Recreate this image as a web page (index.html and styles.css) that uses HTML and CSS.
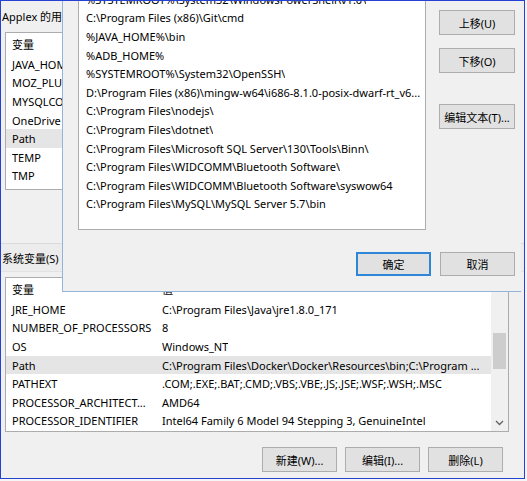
FILE: index.html
```html
<!DOCTYPE html>
<html lang="zh-CN">
<head>
<meta charset="utf-8">
<title>环境变量</title>
<link rel="stylesheet" href="styles.css">
</head>
<body>
<div class="screen">
  <div class="window">
    <div class="label user-label">Applex 的用</div>
    <div class="list user-list">
      <div class="list-head"><div class="cell c1">变量</div></div>
      <div class="row"><div class="cell c1">JAVA_HOME</div></div>
      <div class="row"><div class="cell c1">MOZ_PLUGIN_PATH</div></div>
      <div class="row"><div class="cell c1">MYSQLCONNECTOR</div></div>
      <div class="row"><div class="cell c1">OneDrive</div></div>
      <div class="row sel"><div class="cell c1">Path</div></div>
      <div class="row"><div class="cell c1">TEMP</div></div>
      <div class="row"><div class="cell c1">TMP</div></div>
    </div>
    <div class="sys-band">
      <div class="label">系统变量(S)</div>
    </div>
    <div class="list sys-list">
      <div class="list-body">
        <div class="list-head"><div class="cell c1">变量</div><div class="cell">值</div></div>
        <div class="row"><div class="cell c1">JRE_HOME</div><div class="cell">C:\Program Files\Java\jre1.8.0_171</div></div>
        <div class="row"><div class="cell c1">NUMBER_OF_PROCESSORS</div><div class="cell">8</div></div>
        <div class="row"><div class="cell c1">OS</div><div class="cell">Windows_NT</div></div>
        <div class="row sel"><div class="cell c1">Path</div><div class="cell">C:\Program Files\Docker\Docker\Resources\bin;C:\Program ...</div></div>
        <div class="row"><div class="cell c1">PATHEXT</div><div class="cell">.COM;.EXE;.BAT;.CMD;.VBS;.VBE;.JS;.JSE;.WSF;.WSH;.MSC</div></div>
        <div class="row"><div class="cell c1">PROCESSOR_ARCHITECT...</div><div class="cell">AMD64</div></div>
        <div class="row"><div class="cell c1">PROCESSOR_IDENTIFIER</div><div class="cell">Intel64 Family 6 Model 94 Stepping 3, GenuineIntel</div></div>
      </div>
      <div class="scrollbar">
        <div class="sb-thumb"></div>
        <div class="sb-arrow">
          <svg width="9" height="6" viewBox="0 0 9 6"><polyline points="1,1 4.5,4.5 8,1" fill="none" stroke="#606060" stroke-width="1.3"/></svg>
        </div>
      </div>
    </div>
    <div class="btn-row">
      <button class="btn">新建(W)...</button>
      <button class="btn">编辑(I)...</button>
      <button class="btn">删除(L)</button>
    </div>
  </div>

  <div class="dialog">
    <div class="dlg-main">
      <div class="list dlg-list">
        <div class="row"><div class="cell">%SYSTEMROOT%\System32\WindowsPowerShell\v1.0\</div></div>
        <div class="row"><div class="cell">C:\Program Files (x86)\Git\cmd</div></div>
        <div class="row"><div class="cell">%JAVA_HOME%\bin</div></div>
        <div class="row"><div class="cell">%ADB_HOME%</div></div>
        <div class="row"><div class="cell">%SYSTEMROOT%\System32\OpenSSH\</div></div>
        <div class="row"><div class="cell">D:\Program Files (x86)\mingw-w64\i686-8.1.0-posix-dwarf-rt_v6...</div></div>
        <div class="row"><div class="cell">C:\Program Files\nodejs\</div></div>
        <div class="row"><div class="cell">C:\Program Files\dotnet\</div></div>
        <div class="row"><div class="cell">C:\Program Files\Microsoft SQL Server\130\Tools\Binn\</div></div>
        <div class="row"><div class="cell">C:\Program Files\WIDCOMM\Bluetooth Software\</div></div>
        <div class="row"><div class="cell">C:\Program Files\WIDCOMM\Bluetooth Software\syswow64</div></div>
        <div class="row"><div class="cell">C:\Program Files\MySQL\MySQL Server 5.7\bin</div></div>
      </div>
      <div class="dlg-side">
        <button class="btn">上移(U)</button>
        <button class="btn">下移(O)</button>
        <button class="btn side-gap">编辑文本(T)...</button>
      </div>
    </div>
    <div class="dlg-footer">
      <button class="btn btn-sm default">确定</button>
      <button class="btn btn-sm">取消</button>
    </div>
  </div>
</div>
</body>
</html>
```

FILE: styles.css
```css
* {
  box-sizing: border-box;
}

html,
body {
  margin: 0;
  padding: 0;
}

body {
  width: 527px;
  height: 481px;
  overflow: hidden;
  background: #f5f5f5;
  font-family: "Noto Sans", "Noto Sans CJK SC", sans-serif;
  font-size: 11px;
  color: #000;
}

.screen {
  position: relative;
  width: 527px;
  height: 481px;
}

.window {
  width: 525px;
  height: 479px;
  background: #f0f0f0;
  border: 1px solid #2443d4;
  display: flex;
  flex-direction: column;
  overflow: hidden;
}

.label {
  line-height: 18px;
  white-space: nowrap;
  padding-left: 1px;
}

.user-label {
  padding-top: 7px;
}

.list {
  background: #fff;
  border: 1px solid #acacac;
  overflow: hidden;
}

.user-list {
  margin: 6px 0 0 4px;
  width: 504px;
  height: 158px;
  flex: none;
}

.list-head {
  display: flex;
  align-items: center;
  height: 22px;
}

.row {
  display: flex;
  align-items: center;
  height: 18.6px;
}

.row.sel {
  background: #e5e5e5;
}

.cell {
  padding-left: 6px;
  white-space: nowrap;
  overflow: hidden;
}

.c1 {
  width: 150px;
  flex: none;
}

.sys-band {
  margin-top: 53px;
  height: 29px;
  border-top: 1px solid #dadada;
  background: #ececec;
  border-bottom: 1px solid #e2e2e2;
  padding-top: 6px;
  flex: none;
}

.sys-list {
  margin: 5px 0 0 4px;
  width: 504px;
  height: 155px;
  flex: none;
  display: flex;
}

.list-body {
  flex: 1;
  min-width: 0;
}

.scrollbar {
  width: 17px;
  flex: none;
  background: #f0f0f0;
  display: flex;
  flex-direction: column;
  align-items: center;
}

.sb-thumb {
  margin-top: 55px;
  width: 13px;
  height: 36px;
  background: #cdcdcd;
}

.sb-arrow {
  margin-top: auto;
  height: 17px;
  display: flex;
  align-items: center;
  justify-content: center;
}

.sb-arrow svg {
  display: block;
}

.btn-row {
  display: flex;
  justify-content: flex-end;
  gap: 8px;
  margin-top: 15px;
  padding-right: 21px;
}

.btn {
  width: 75px;
  height: 25px;
  margin: 0;
  padding: 0;
  background: #e1e1e1;
  border: 1px solid #adadad;
  font-family: "Noto Sans", "Noto Sans CJK SC", sans-serif;
  font-size: 11px;
  color: #000;
  display: flex;
  align-items: center;
  justify-content: center;
  white-space: nowrap;
}

.btn.default {
  border: 2px solid #2f86d8;
}

.btn-sm {
  height: 24px;
}

/* front dialog */
.dialog {
  position: absolute;
  left: 62px;
  top: 1px;
  width: 459px;
  height: 291px;
  background: #f0f0f0;
  border-left: 1px solid #92b4dd;
  border-bottom: 1px solid #92b4dd;
  display: flex;
  flex-direction: column;
  padding: 0 5px 0 15px;
  overflow: hidden;
}

.dlg-main {
  display: flex;
  align-items: flex-start;
  gap: 13px;
}

.dlg-list {
  margin-top: -12px;
  width: 348px;
  height: 241px;
  flex: none;
}

.dlg-list .cell {
  padding-left: 7px;
}

.dlg-side {
  display: flex;
  flex-direction: column;
  gap: 13px;
  padding-top: 9px;
}

.dlg-side .btn {
  width: 76px;
}

.dlg-side .side-gap {
  margin-top: 18px;
}

.dlg-footer {
  display: flex;
  justify-content: flex-end;
  gap: 9px;
  margin-top: 22px;
  padding-right: 1px;
}
```
